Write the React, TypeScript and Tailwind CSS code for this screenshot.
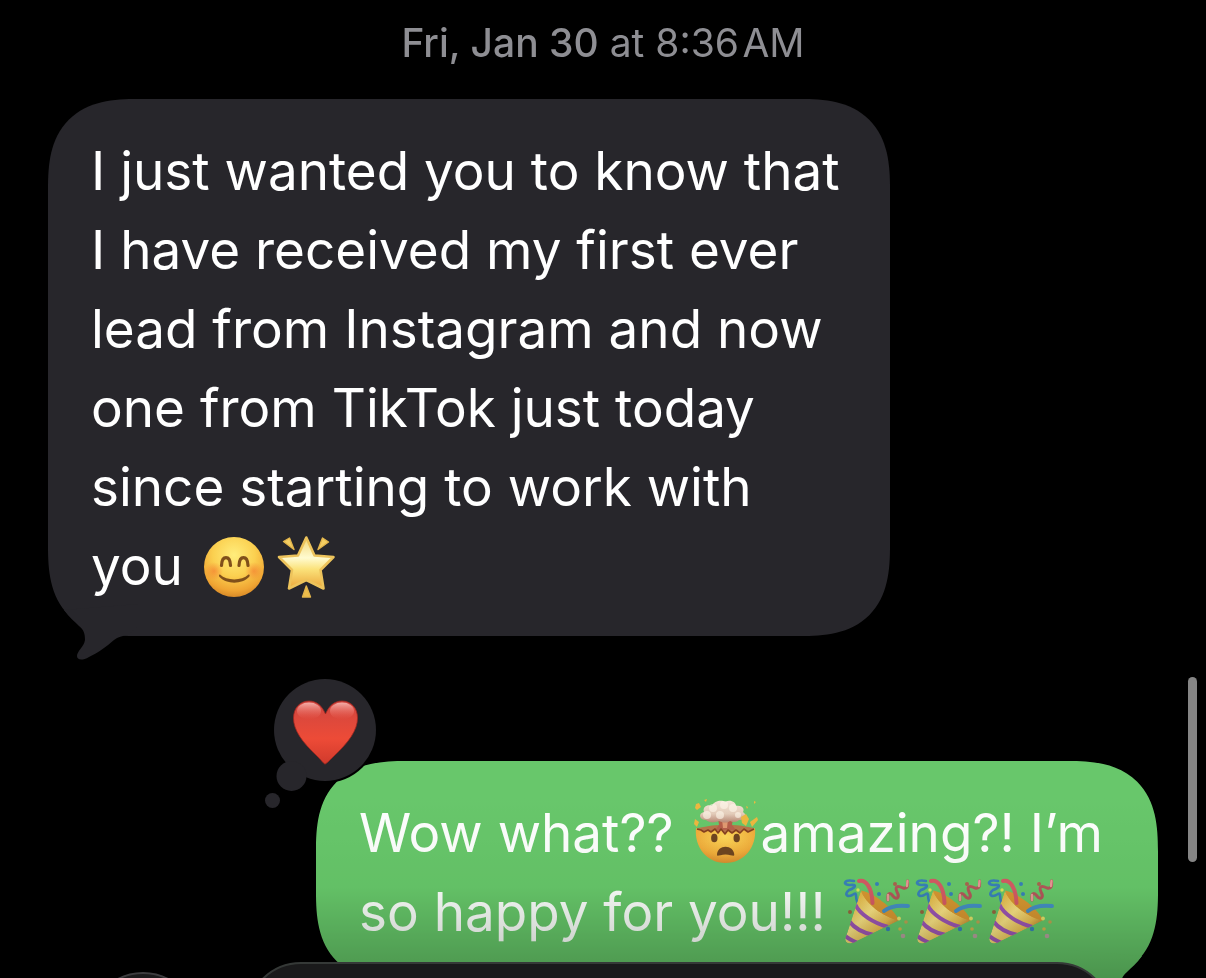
import React from 'react';

interface EmojiProps {
  className?: string;
}

const SmileEmoji: React.FC<EmojiProps> = ({ className }) => (
  <svg viewBox="0 0 72 72" className={className} role="img" aria-label="Smiling face">
    <defs>
      <radialGradient id="smile-face" cx="0.5" cy="0.3" r="0.7">
        <stop offset="0" stopColor="#ffed7c" />
        <stop offset="0.5" stopColor="#fbd050" />
        <stop offset="0.85" stopColor="#f0a533" />
        <stop offset="1" stopColor="#d88a28" />
      </radialGradient>
      <radialGradient id="smile-blush">
        <stop offset="0" stopColor="#f4762e" stopOpacity="0.6" />
        <stop offset="1" stopColor="#f4762e" stopOpacity="0" />
      </radialGradient>
    </defs>
    <circle cx="36" cy="36" r="30" fill="url(#smile-face)" />
    <circle cx="16" cy="40" r="9" fill="url(#smile-blush)" />
    <circle cx="56" cy="40" r="9" fill="url(#smile-blush)" />
    <g fill="none" stroke="#80501a" strokeLinecap="round">
      <path d="M23.5 34.5C24 24 32 24 32.5 34.5" strokeWidth="3.2" />
      <path d="M41 34.5C41.500 24 49.500 24 50 34.5" strokeWidth="3.2" />
    </g>
    <path d="M22 43.500C29 50 43.500 50 50.500 43.500C52 43 52 45 51 46C44 53.500 28.500 53.500 21.500 46C20.500 44.500 21 43 22 43.500Z" fill="#80501a" />
  </svg>
);

const StarEmoji: React.FC<EmojiProps> = ({ className }) => (
  <svg viewBox="0 0 72 72" className={className} role="img" aria-label="Glowing star">
    <defs>
      <linearGradient id="star-fill" x1="0" y1="0" x2="0" y2="1">
        <stop offset="0" stopColor="#f3d675" />
        <stop offset="0.4" stopColor="#fffbd0" />
        <stop offset="0.62" stopColor="#fbe27a" />
        <stop offset="1" stopColor="#eba63a" />
      </linearGradient>
    </defs>
    <path
      d="M36.300 6.500L44.500 24.500L63.500 26L50.500 39L53.500 57.500L36.300 49L19 57.500L22 39L9 26L28 24.500Z"
      fill="url(#star-fill)"
      stroke="#edc35b"
      strokeWidth="2.6"
      strokeLinejoin="round"
    />
    <g fill="#f4ce63" stroke="#e4b64c" strokeWidth="1.4" strokeLinejoin="round">
      <path d="M13.500 10.500L19.500 7L24 18.500Z" />
      <path d="M52.500 7L58.500 11L48 18.500Z" />
      <path d="M36.300 55L32.500 66H40.500Z" fill="#eebd4b" />
    </g>
  </svg>
);

const MindBlownEmoji: React.FC<EmojiProps> = ({ className }) => (
  <svg viewBox="0 0 72 72" className={className} role="img" aria-label="Exploding head">
    <defs>
      <radialGradient id="blown-face" cx="0.5" cy="0.25" r="0.85">
        <stop offset="0" stopColor="#ffd95a" />
        <stop offset="0.6" stopColor="#f2ad3b" />
        <stop offset="1" stopColor="#d07e28" />
      </radialGradient>
      <linearGradient id="blown-cloud" x1="0" y1="0" x2="0" y2="1">
        <stop offset="0" stopColor="#f4e8da" />
        <stop offset="0.6" stopColor="#e5cdbb" />
        <stop offset="1" stopColor="#b98774" />
      </linearGradient>
    </defs>
    <path d="M9 30Q37 23 65 30L62 34Q37 40 11 34Z" fill="#b9754a" />
    <path d="M29 20H44L43 27L47 32H26L30 27Z" fill="#b75f4b" />
    <path d="M33 21H39L38 30H34Z" fill="#e39a72" />
    <path
      d="M7 30L12 32L15 34L19 32L22 34L26 31L29 35L32 31L36 36L39 32L43 35L47 32L51 35L55 31L59 34L66 30C68 49 55 65 36.500 65C18 65 5 49 7 30Z"
      fill="url(#blown-face)"
    />
    <path
      d="M8 31L12 32L15 34L19 32L22 34L26 31L29 35L32 31L36 36L39 32L43 35L47 32L51 35L55 31L59 34L65 31"
      fill="none"
      stroke="#87411f"
      strokeWidth="1.6"
      strokeLinejoin="round"
    />
    <path
      d="M17 22C10 22 9 15 15 14C13 9 19 6 23 8C25 2 34 2 36 4C41 1 47 4 47 8C53 7 56 11 54 14C59 17 56 23 50 22C47 25 43 24 41 23C37 26 32 24 30 23C26 25 20 25 17 22Z"
      fill="url(#blown-cloud)"
    />
    <g fill="#fff6ea" opacity="0.65">
      <circle cx="24" cy="10" r="4" />
      <circle cx="35" cy="7" r="4" />
      <circle cx="44" cy="10" r="4" />
      <circle cx="18" cy="17" r="4" />
      <circle cx="31" cy="17" r="4" />
      <circle cx="49" cy="17" r="3" />
    </g>
    <g fill="#efb83f">
      <path d="M7 6L10 5L12 9L8 12L6 10Z" />
      <path d="M6 21L10 24L8 29L5 26Z" />
      <path d="M52 19L57 16L60 21L57 28L53 25Z" />
      <path d="M61 24L68 19L69 22L63 29Z" />
      <path d="M57 8L59 9L58 11Z" />
      <path d="M15 2L18 1L17 4Z" />
      <path d="M65 3L67 4L65 6Z" />
    </g>
    <ellipse cx="25.300" cy="40" rx="3.200" ry="4.300" fill="#6f4520" />
    <ellipse cx="47.700" cy="40" rx="3.200" ry="4.300" fill="#6f4520" />
    <path d="M28 57C28 46 45 46 45.300 57C45 59 42 56.500 36.500 56.500C31 56.500 28 59 28 57Z" fill="#6f4520" />
  </svg>
);

const PartyEmoji: React.FC<EmojiProps> = ({ className }) => (
  <svg viewBox="0 0 72 72" className={className} role="img" aria-label="Party popper">
    <defs>
      <linearGradient id="party-cone" x1="0" y1="0.3" x2="0.7" y2="1">
        <stop offset="0" stopColor="#e6b440" />
        <stop offset="0.4" stopColor="#ffe588" />
        <stop offset="0.75" stopColor="#eebd52" />
        <stop offset="1" stopColor="#ae7828" />
      </linearGradient>
      <clipPath id="party-clip">
        <path d="M20 13.500C24 26 42 40 58 43.500L14 65C9 68 3 66 4.500 61Z" />
      </clipPath>
    </defs>
    <path d="M13 4C3 2 1 8 9 8C17 7 14 11 8 13C2 18 7 21 13 17C17 15 13 23 18 27" fill="none" stroke="#3982bd" strokeWidth="2.600" strokeLinecap="round" />
    <path d="M20 13.500C31 15 53 31 58 43.500L45 43L23 24Z" fill="#dd9832" />
    <g clipPath="url(#party-clip)">
      <path d="M20 13.500C24 26 42 40 58 43.500L14 65C9 68 3 66 4.500 61Z" fill="url(#party-cone)" />
      <g fill="none" stroke="#a056b8" strokeWidth="4">
        <path d="M14 27C19 38 33 46 47 50" />
        <path d="M8 44C14 52 22 56 33 58" />
        <path d="M3 58C7 62 12 64 17 66" />
      </g>
    </g>
    <path d="M18 4C25 2 31 11 31.500 26" fill="none" stroke="#d95b66" strokeWidth="4" strokeLinecap="round" />
    <path d="M43 34C49 29 57 28 67 29" fill="none" stroke="#4690ca" strokeWidth="4" strokeLinecap="round" />
    <path d="M47 23C46 16 49 15 52 19C56 24 59 20 56 15C53 8 58 9 62 11C67 12 67 8 66.500 4" fill="none" stroke="#b5585b" strokeWidth="3" strokeLinecap="round" />
    <path d="M47 23V18M66 9L66.500 4" fill="none" stroke="#ec9a98" strokeWidth="2.4" strokeLinecap="round" />
    <g>
      <circle cx="17" cy="13" r="1.700" fill="#dfe35b" />
      <circle cx="36" cy="7" r="2" fill="#3982bd" />
      <circle cx="38" cy="17" r="2" fill="#3982bd" />
      <circle cx="54" cy="7" r="2" fill="#ad6550" />
      <circle cx="9" cy="35" r="2" fill="#98683f" />
      <circle cx="58" cy="41.500" r="1.900" fill="#e8e36b" />
      <circle cx="65" cy="45" r="1.800" fill="#c1a354" />
      <circle cx="47" cy="52" r="2.200" fill="#3982bd" />
      <circle cx="59" cy="52" r="1.800" fill="#d6b34f" />
      <circle cx="62" cy="59" r="2.300" fill="#b9a0a0" />
    </g>
  </svg>
);

// Bubble tail, drawn for an incoming message. Outgoing ones flip it.
const Tail: React.FC<EmojiProps> = ({ className }) => (
  <svg viewBox="0 0 100 80" className={className} aria-hidden="true">
    <path
      d="M16 30C21 37 27 42 31 46C36 50 37 54 37 60C36 67 29 71 29 76C29 80 34 81 41 77C50 73 59 66 66 60C70 57 74 56 80 55L90 46V24Z"
      fill="currentColor"
    />
  </svg>
);

const HeartReaction: React.FC = () => (
  <svg viewBox="0 0 120 140" className="absolute -left-14 top-[-91px] w-[120px] h-[140px]" role="img" aria-label="Loved">
    <defs>
      <linearGradient id="heart-fill" x1="0" y1="0" x2="0" y2="1">
        <stop offset="0" stopColor="#cf4640" />
        <stop offset="0.6" stopColor="#ed4b37" />
        <stop offset="1" stopColor="#d03a2c" />
      </linearGradient>
      <linearGradient id="heart-shine" x1="0" y1="0" x2="0" y2="1">
        <stop offset="0" stopColor="#ffd0cb" stopOpacity="0.75" />
        <stop offset="1" stopColor="#f36a5c" stopOpacity="0" />
      </linearGradient>
    </defs>
    <circle cx="65" cy="60" r="53" fill="#000" />
    <circle cx="65" cy="60" r="51" fill="#27262b" />
    <circle cx="31.500" cy="106" r="15" fill="#27262b" />
    <circle cx="12.500" cy="130.500" r="7.500" fill="#27262b" />
    <path
      d="M65 94C64 94 62 91 57 86C42 72 33.500 60 33.500 48C33.500 38 40 31 49 31C57 31 62 36 65.500 44C69 36 74 31 82 31C91 31 97.500 38 97.500 48C97.500 60 89 72 74 86C69 91 66 94 65 94Z"
      fill="url(#heart-fill)"
      stroke="#a32720"
      strokeWidth="0.8"
    />
    <ellipse cx="49" cy="41" rx="12" ry="8.500" fill="url(#heart-shine)" />
    <ellipse cx="82" cy="41" rx="12" ry="8.500" fill="url(#heart-shine)" />
  </svg>
);

const Line: React.FC<{ children: React.ReactNode }> = ({ children }) => (
  <span className="flex items-center whitespace-pre">{children}</span>
);

const App: React.FC = () => {
  return (
    <div className="relative h-screen overflow-hidden bg-black font-['Inter',sans-serif]">
      <main className="flex flex-col px-12">
        <time className="mt-[19px] text-center text-[39px] leading-[48px] text-[#8e8e93]">
          <span className="font-medium">Fri, Jan 30</span> at 8:36&#8202;AM
        </time>

        <div className="relative mt-8 w-[842px] max-w-full rounded-[90px] [corner-shape:superellipse(1.4)] bg-[#27262b] px-[43px] pt-[33px] pb-[30px] text-[53px] leading-[79px] text-white">
          <Tail className="absolute left-0 -bottom-6 w-[100px] h-20 text-[#27262b]" />
          <p className="relative">
            <Line>I just wanted you to know that</Line>
            <Line>I have received my first ever</Line>
            <Line>lead from Instagram and now</Line>
            <Line>one from TikTok just today</Line>
            <Line>since starting to work with</Line>
            <Line>
              you <SmileEmoji className="size-[72px] shrink-0" />
              <StarEmoji className="size-[72px] shrink-0" />
            </Line>
          </p>
        </div>

        <div className="relative mt-[125px] w-[842px] max-w-full self-end rounded-[90px] [corner-shape:superellipse(1.4)] bg-[#68c76b] px-[43px] pt-[33px] pb-[30px] text-[53px] leading-[79px] text-white">
          <Tail className="absolute right-0 -bottom-6 w-[100px] h-20 -scale-x-100 text-[#68c76b]" />
          <HeartReaction />
          <p className="relative">
            <Line>
              Wow what?? <MindBlownEmoji className="size-[72px] shrink-0" />
              amazing?! I’m
            </Line>
            <Line>
              so happy for you!!! <PartyEmoji className="size-[72px] shrink-0" />
              <PartyEmoji className="size-[72px] shrink-0" />
              <PartyEmoji className="size-[72px] shrink-0" />
            </Line>
          </p>
        </div>
      </main>

      <div className="pointer-events-none absolute inset-x-0 bottom-0 h-[180px] bg-linear-to-b from-white via-[#f2f6f2] to-[#b8beb8] mix-blend-multiply" />
      <div className="absolute right-[9px] top-[677px] h-[185px] w-[9px] rounded-full bg-[#858585]" />

      <footer className="absolute inset-x-0 bottom-0 flex h-4 items-start overflow-hidden pl-[88px] pr-[94px]">
        <button aria-label="Add attachment" className="mt-[10px] size-[110px] shrink-0 rounded-full border-2 border-[#3d3d3f] bg-[#1a1a1b]" />
        <input
          aria-label="Message"
          className="ml-[48px] h-[110px] min-w-0 flex-1 rounded-full border-2 border-[#353937] bg-[#1a1a1b]"
        />
      </footer>
    </div>
  );
};

export default App;
